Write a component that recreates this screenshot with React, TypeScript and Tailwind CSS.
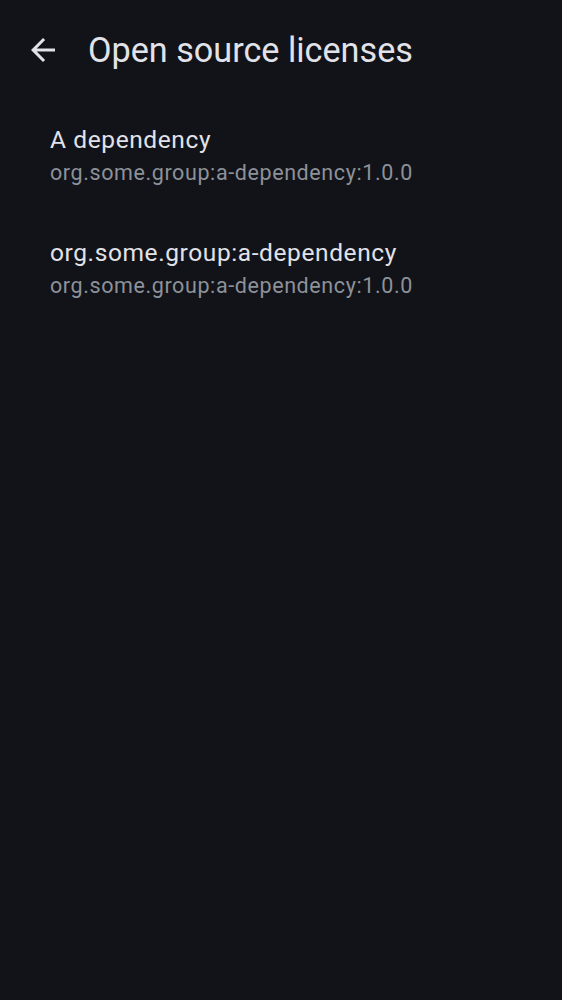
const DEPS = [
  { name: 'A dependency', coords: 'org.some.group:a-dependency:1.0.0' },
  { name: 'org.some.group:a-dependency', coords: 'org.some.group:a-dependency:1.0.0' },
]

export default function App() {
  return (
    <div className="min-h-[1000px] w-full bg-[#111318] font-['Roboto',sans-serif]">
      <header className="flex h-[99px] items-center">
        <button aria-label="Back" className="ml-[25px] flex h-[36px] w-[36px] items-center justify-center text-[#e2e2e9]">
          <BackIcon />
        </button>
        <h1 className="ml-[27px] text-[34.2px] leading-[44px] text-[#e2e2e9]">Open source licenses</h1>
      </header>

      <ul>
        {DEPS.map((d, i) => (
          <li key={i} className="flex h-[112.5px] flex-col px-[50px] pt-[23px]">
            <span className="text-[24.5px] leading-[36px] tracking-[0.6px] text-[#e2e2e9]">{d.name}</span>
            <span className="text-[21.5px] leading-[30px] tracking-[0.6px] text-[#8d9199]">{d.coords}</span>
          </li>
        ))}
      </ul>
    </div>
  )
}

function BackIcon() {
  return (
    <svg width="36" height="36" viewBox="0 0 24 24" fill="currentColor">
      <path d="M20 11H7.83l5.59-5.59L12 4l-8 8 8 8 1.41-1.41L7.83 13H20v-2z" />
    </svg>
  )
}
